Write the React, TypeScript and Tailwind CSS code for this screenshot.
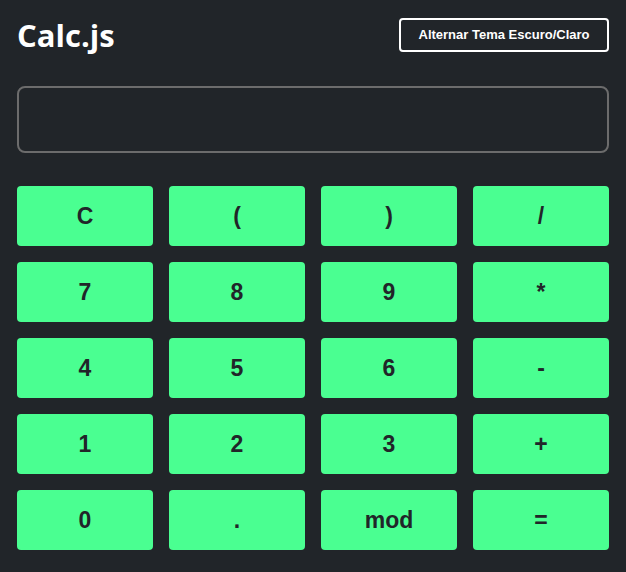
import React from "react";

const keys = ["C", "(", ")", "/", "7", "8", "9", "*", "4", "5", "6", "-", "1", "2", "3", "+", "0", ".", "mod", "="];

export default function App() {
  return (
    <div className="min-h-[572px] bg-[#212529] px-[17px] pt-[18px] pb-[22px]" style={{ fontFamily: "'Liberation Sans', Arial, sans-serif" }}>
      <div className="flex h-[34px] items-center justify-between">
        <h1 className="text-[31px] font-bold leading-none text-white" style={{ fontFamily: "'Open Sans', 'Noto Sans', sans-serif" }}>
          Calc.js
        </h1>
        <button className="h-[34px] w-[210px] rounded-[4px] border-2 border-white text-[13px] font-bold text-white">
          Alternar Tema Escuro/Claro
        </button>
      </div>
      <div className="mt-[34px] h-[67px] rounded-[8px] border-2 border-[#6c6c6c]" />
      <div className="mt-[33px] grid grid-cols-4 gap-x-[16px] gap-y-[16px]">
        {keys.map((k) => (
          <button key={k} className="flex h-[60px] items-center justify-center rounded-[4px] bg-[#4aff91] text-[23px] font-bold text-[#212529]">
            {k}
          </button>
        ))}
      </div>
    </div>
  );
}
